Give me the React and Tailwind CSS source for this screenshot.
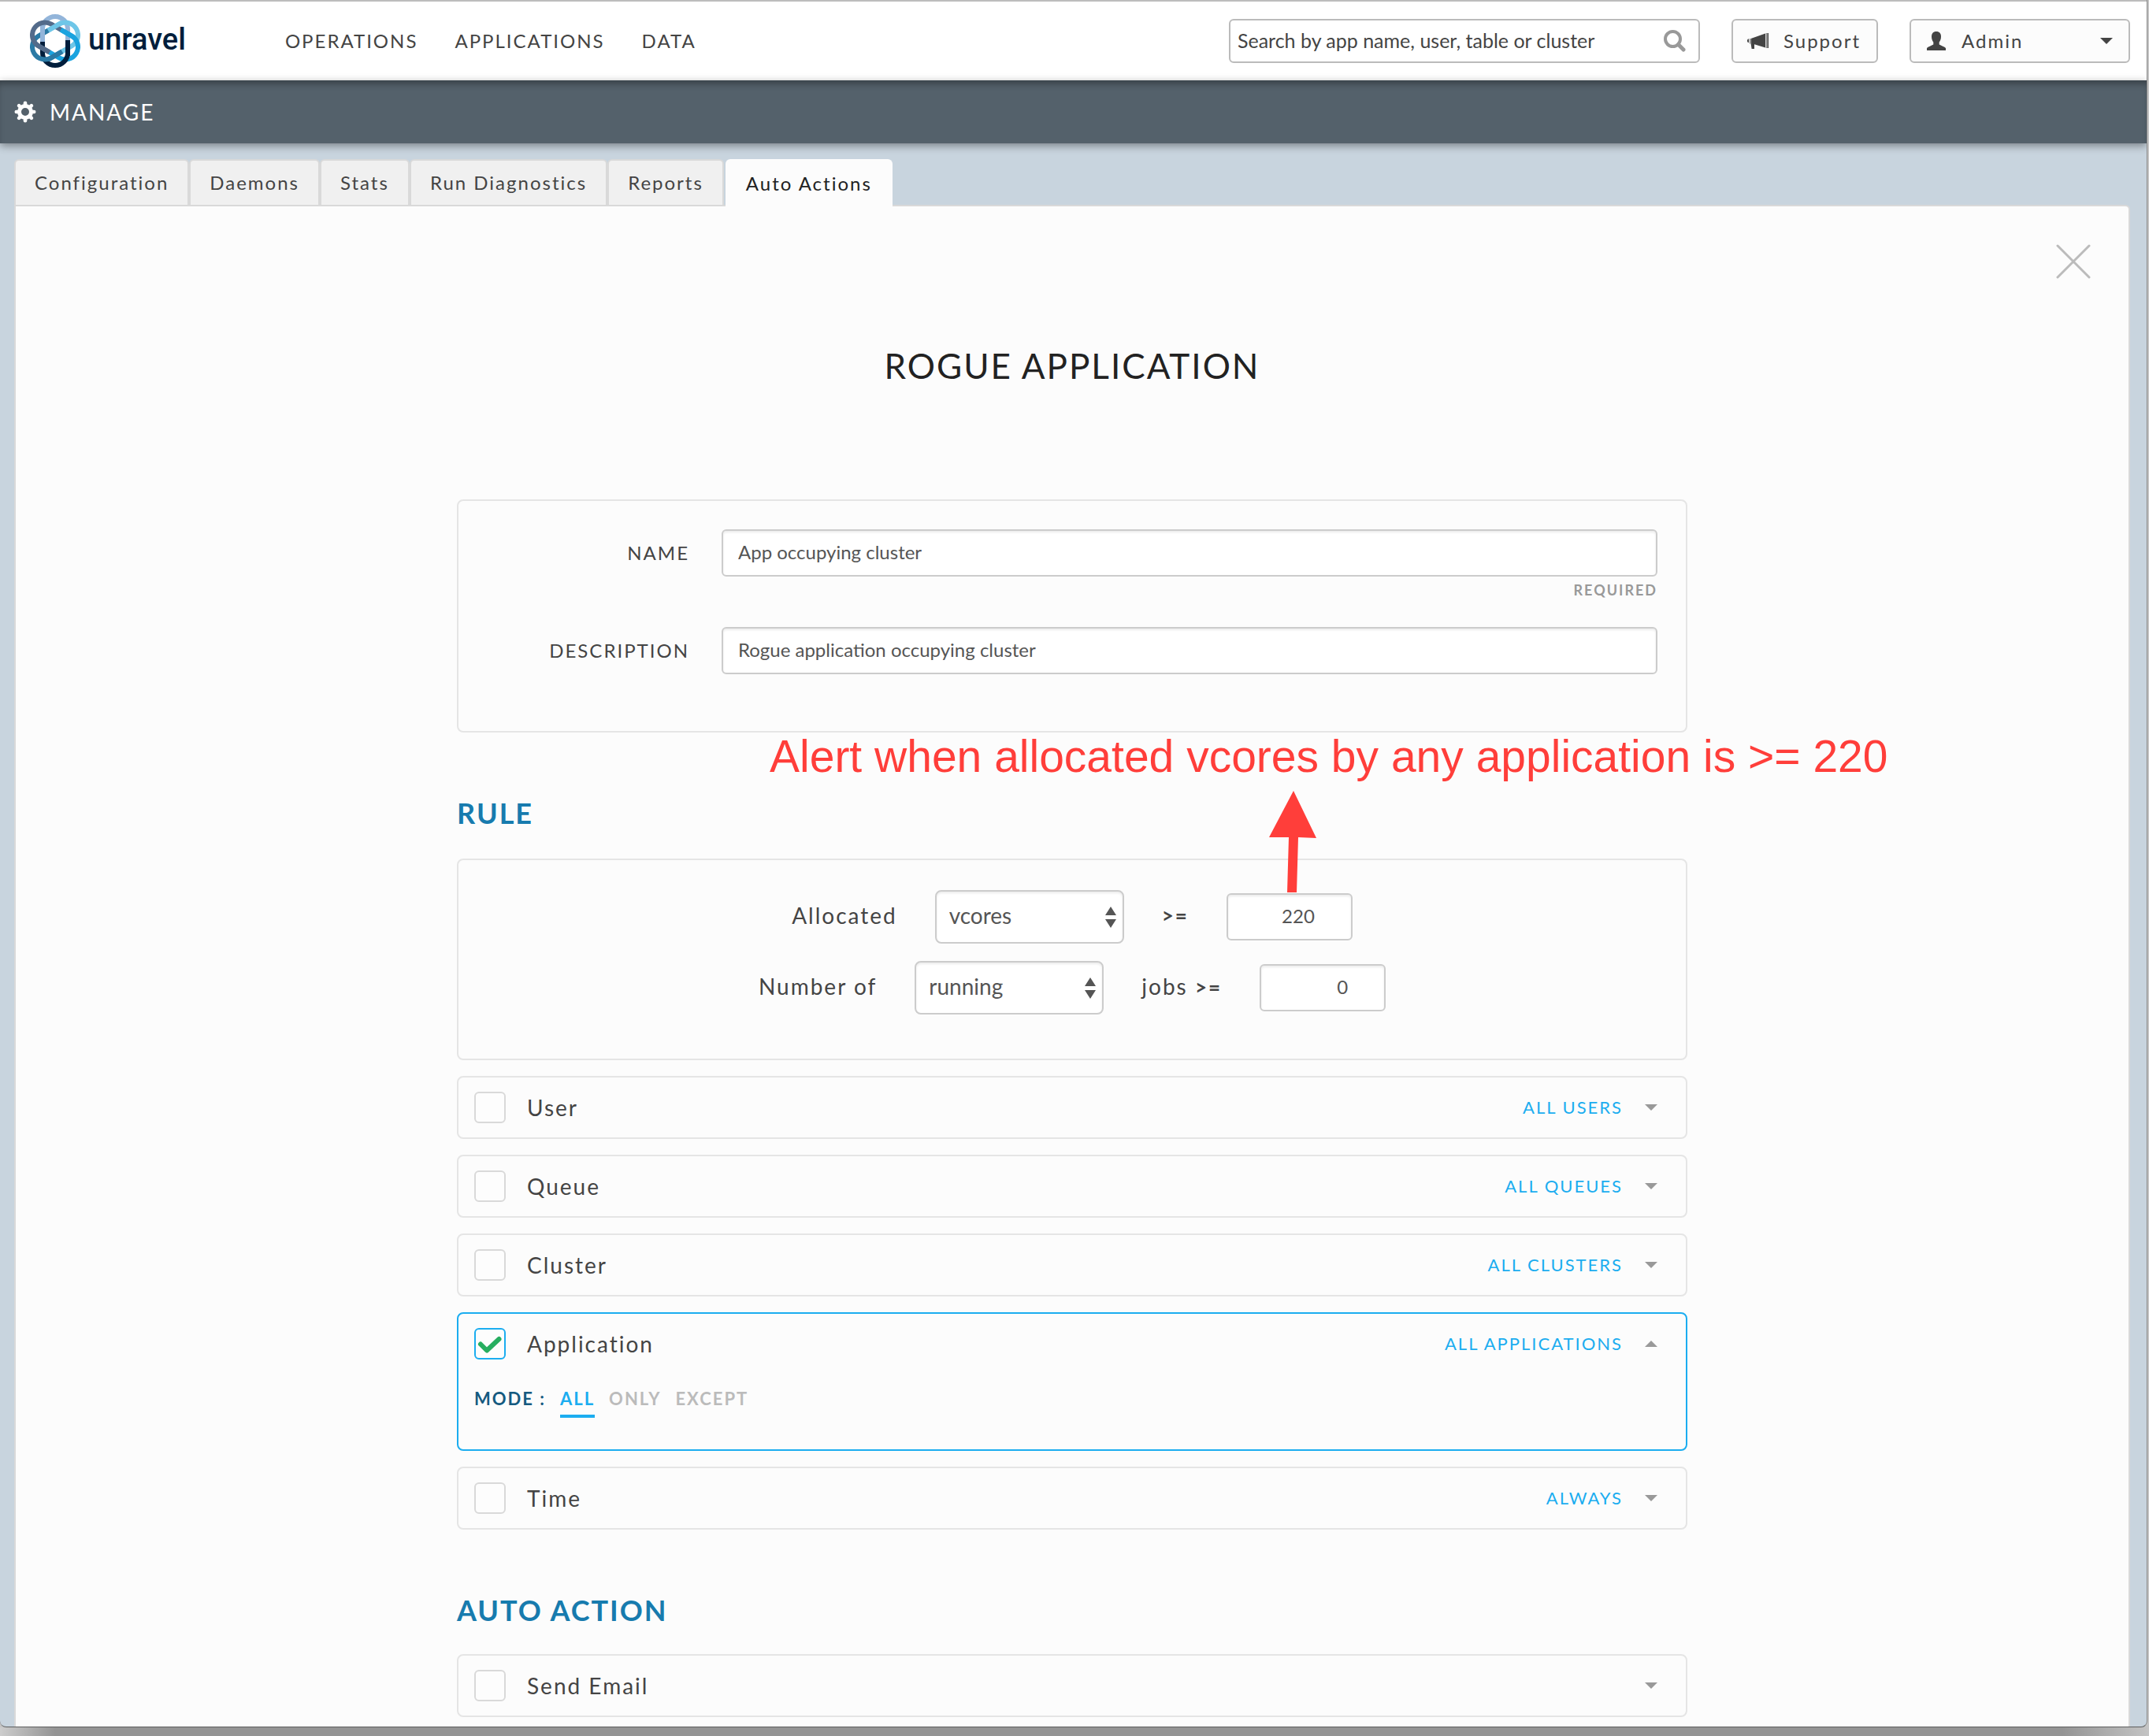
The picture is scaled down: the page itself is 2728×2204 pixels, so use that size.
const LINKS = [
  { color: "#93b5da", turn: "rotate(0)" },
  { color: "#6ec6e8", turn: "rotate(60)" },
  { color: "#1aa3df", turn: "rotate(120)" },
  { color: "#001e3c", turn: "rotate(180)" },
  { color: "#2b7aa5", turn: "rotate(240)" },
  { color: "#536b8a", turn: "rotate(300)" },
];

function LogoMark() {
  return (
    <svg className="h-[70px] w-16" viewBox="-32 -35 64 70" fill="none" strokeWidth="6" aria-hidden="true">
      {LINKS.map((l) => (
        <path key={l.color} d="M-16 0V-15A16 16 0 0 1 16 -15V0" stroke={l.color} transform={l.turn} />
      ))}
      {LINKS.map((l) => (
        <path key={l.color} d="M-16 1V-19" stroke={l.color} transform={l.turn} />
      ))}
    </svg>
  );
}

function GearIcon() {
  return (
    <svg className="h-7 w-7" viewBox="-14 -14 28 28" fill="none" stroke="#fff" aria-hidden="true">
      <circle r="7.5" strokeWidth="5" />
      {[0, 45, 90, 135, 180, 225, 270, 315].map((a) => (
        <path key={a} d="M0 -9V-11.2" strokeWidth="4.6" strokeLinecap="round" transform={`rotate(${a})`} />
      ))}
    </svg>
  );
}

function SearchIcon() {
  return (
    <svg className="h-7 w-7" viewBox="0 0 28 28" fill="none" stroke="#999" aria-hidden="true">
      <circle cx="11.5" cy="11.5" r="9.5" strokeWidth="4" />
      <path d="M18.500 18.500L25 25" strokeWidth="5" strokeLinecap="round" />
    </svg>
  );
}

function MegaphoneIcon() {
  return (
    <svg className="h-5 w-[27px]" viewBox="0 0 27 20" fill="#444" aria-hidden="true">
      <path d="M2 7.200V12.300A2.600 2.600 0 0 1 2 7.200Z" />
      <path d="M3.300 7H4V13.500H3.300Z" />
      <path d="M4.600 7L23 0.400V18.600L9 14.300V20H5.600L4.600 13.500Z" />
      <path d="M23.800 0H24.600V19H23.800ZM25.400 0H27V19H25.400Z" />
    </svg>
  );
}

function PersonIcon() {
  return (
    <svg className="h-6 w-6" viewBox="0 0 24 24" fill="#444" aria-hidden="true">
      <path d="M12 0C8 0 6 2.600 6 6.500C6 9.500 7 12 8.300 13.500V16.500C6 18 1.500 19.200 0 21V24H24V21C22.500 19.200 18 18 15.700 16.500V13.500C17 12 18 9.500 18 6.500C18 2.600 16 0 12 0Z" />
    </svg>
  );
}

function Caret({ up = false, color = "#999" }) {
  return (
    <svg className="h-2 w-4" viewBox="0 0 16 8" fill={color} aria-hidden="true">
      <path d={up ? "M0 8L8 0L16 8Z" : "M0 0L8 8L16 0Z"} />
    </svg>
  );
}

const TABS = ["Configuration", "Daemons", "Stats", "Run Diagnostics", "Reports", "Auto Actions"];

const FIELD =
  "h-[60px] rounded-md border-2 border-[#ccc] bg-white pb-1 text-[24px] tracking-normal text-[#555] shadow-[inset_0_2px_3px_rgba(0,0,0,0.08)] outline-none";

function Select({ label, value, options }) {
  return (
    <span className="relative flex">
      <select
        aria-label={label}
        defaultValue={value}
        className="h-[68px] w-60 appearance-none rounded-lg border-2 border-[#ccc] bg-white pb-1 pl-4 text-[28px] tracking-normal text-[#555] shadow-[inset_0_2px_3px_rgba(0,0,0,0.08)] outline-none"
      >
        {options.map((o) => (
          <option key={o}>{o}</option>
        ))}
      </select>
      <svg
        className="pointer-events-none absolute top-5 right-2.5 h-7 w-3.5"
        viewBox="0 0 14 28"
        fill="#555"
        aria-hidden="true"
      >
        <path d="M0 12L7 1L14 12ZM0 17L7 28L14 17Z" />
      </svg>
    </span>
  );
}

function OptionCard({ label, summary, checked = false, children }) {
  const id = `opt-${label.toLowerCase().replace(" ", "-")}`;
  return (
    <div
      className={
        checked
          ? "rounded-lg border-2 border-[#1badf0]"
          : "rounded-lg border-2 border-[#e5e5e5]"
      }
    >
      <div className="flex items-center py-[18px] pr-9 pl-5">
        <span className="relative flex">
          <input
            id={id}
            type="checkbox"
            defaultChecked={checked}
            className="peer h-10 w-10 appearance-none rounded-md border-2 border-[#d9d9d9] bg-[#fdfdfd] checked:border-[#1badf0]"
          />
          <svg
            className="pointer-events-none absolute inset-0 hidden h-10 w-10 peer-checked:block"
            viewBox="0 0 40 40"
            fill="none"
            stroke="#27ae60"
            strokeWidth="6"
            strokeLinecap="round"
            strokeLinejoin="round"
            aria-hidden="true"
          >
            <path d="M8 20.500L16 28.500L31.500 14" />
          </svg>
        </span>
        <label htmlFor={id} className="ml-[27px] text-[28px] leading-10 tracking-[2px]">
          {label}
        </label>
        <button
          type="button"
          aria-expanded={checked}
          aria-label={summary ? undefined : `Expand ${label}`}
          className="ml-auto flex items-center gap-7 text-[22px] leading-10 tracking-[2px] text-[#1badf0]"
        >
          {summary}
          <Caret up={checked} />
        </button>
      </div>
      {children}
    </div>
  );
}

export default function App() {
  return (
    <div className="flex min-h-screen flex-col bg-[#c4c4c4] font-[Lato,sans-serif] text-[24px] text-[#444]">
      <div className="mr-0.5 flex flex-1 flex-col overflow-hidden rounded-b-lg border-r border-b border-r-[#8a8a8a] border-b-[#5e5e5e] bg-[#c8d4de]">
        <header className="flex items-center border-t-2 border-[#bdbdbd] bg-white py-[22px] pr-[21px] pl-[38px]">
          <a href="#home" className="-my-2 flex items-center gap-2.5 font-[Roboto,sans-serif] text-[38px] leading-10 font-medium text-[#001e3c]">
            <LogoMark />
            <span className="pb-1">unravel</span>
          </a>
          <nav className="ml-[126px] flex gap-[47px] leading-8 tracking-[2px]">
            <a href="#operations">OPERATIONS</a>
            <a href="#applications">APPLICATIONS</a>
            <a href="#data">DATA</a>
          </nav>
          <div className="ml-auto flex gap-10">
            <label className="flex h-14 w-[598px] items-center rounded-md border-2 border-[#bbb] bg-white pr-4 pl-[9px]">
              <input
                type="text"
                aria-label="Search"
                placeholder="Search by app name, user, table or cluster"
                className="min-w-0 flex-1 text-[25px] outline-none placeholder:text-[#444]"
              />
              <SearchIcon />
            </label>
            <button type="button" className="flex h-14 items-center gap-[19px] rounded-md border-2 border-[#bbb] bg-[#fcfcfc] pr-5 pl-[18px] tracking-[2px]">
              <MegaphoneIcon />
              Support
            </button>
            <button type="button" className="flex h-14 w-[280px] items-center gap-5 rounded-md border-2 border-[#bbb] bg-[#fcfcfc] px-5 tracking-[2px]">
              <PersonIcon />
              <span className="mr-auto">Admin</span>
              <Caret color="#444" />
            </button>
          </div>
        </header>

        <div className="flex h-20 items-center gap-[17px] bg-[#54616b] pl-[18px] text-white shadow-[inset_0_8px_10px_-4px_rgba(0,0,0,0.35),0_3px_10px_rgba(0,0,0,0.4)]">
          <GearIcon />
          <h1 className="text-[28px] tracking-[2px]">MANAGE</h1>
        </div>

        <div className="mt-5 flex pl-[18px]" role="tablist">
          {TABS.map((t) => {
            const active = t === "Auto Actions";
            return (
              <button
                key={t}
                type="button"
                role="tab"
                aria-selected={active}
                className={
                  active
                    ? "relative -mb-0.5 ml-0.5 h-[60px] rounded-t-md border-2 border-b-0 border-[#fcfcfc] bg-[#fcfcfc] px-6 tracking-[2px] text-[#222]"
                    : "h-[58px] rounded-t-md border-2 border-b-0 border-[#d9d9d9] bg-[#f0f0f0] px-6 tracking-[2px]"
                }
              >
                {t}
              </button>
            );
          })}
        </div>

        <main className="mr-[21px] ml-[18px] flex-1 rounded-tr-md border-2 border-b-0 border-[#d9d9d9] bg-[#fcfcfc] pb-2.5">
          <div className="flex justify-end pt-12 pr-12">
            <button type="button" aria-label="Close">
              <svg className="h-11 w-11" viewBox="0 0 44 44" stroke="#bbb" strokeWidth="3" strokeLinecap="round" aria-hidden="true">
                <path d="M2 2L42 42M42 2L2 42" />
              </svg>
            </button>
          </div>
          <h2 className="mt-[82px] text-center text-[44px] leading-14 tracking-[2px] text-[#222]">ROGUE APPLICATION</h2>

          <form className="mx-auto mt-[142px] max-w-[1562px]">
            <div className="grid grid-cols-[293px_1fr] gap-x-[41px] rounded-lg border-2 border-[#e5e5e5] pt-9 pr-9 pb-[72px]">
              <label htmlFor="name" className="text-right leading-[60px] tracking-[2px]">NAME</label>
              <input id="name" type="text" defaultValue="App occupying cluster" className={`${FIELD} px-[19px]`} />
              <div className="col-start-2 pt-[5px] pb-[35px] text-right text-[18px] leading-6 font-bold tracking-[2px] text-[#999]">
                REQUIRED
              </div>
              <label htmlFor="description" className="text-right leading-[60px] tracking-[2px]">DESCRIPTION</label>
              <input id="description" type="text" defaultValue="Rogue application occupying cluster" className={`${FIELD} px-[19px]`} />
            </div>

            <section className="relative pt-[78px]">
              <h3 className="mb-[34px] text-[36px] leading-[48px] font-bold tracking-[2px] text-[#177bae]">RULE</h3>
              <div className="flex flex-col gap-[22px] rounded-lg border-2 border-[#e5e5e5] pt-[38px] pb-14 text-[28px] tracking-[2px]">
                <div className="flex items-center justify-center gap-12">
                  <span className="pb-1">Allocated</span>
                  <Select label="Allocated resource" value="vcores" options={["vcores", "memory"]} />
                  <span className="pb-1 text-[26px] font-bold">&gt;=</span>
                  <input type="text" inputMode="numeric" aria-label="Allocated threshold" defaultValue="220" className={`${FIELD} w-40 pr-[46px] text-right`} />
                </div>
                <div className="flex items-center justify-center gap-12">
                  <span className="pb-1">Number of</span>
                  <Select label="Job state" value="running" options={["running", "pending"]} />
                  <span className="pb-1">jobs <span className="text-[26px] font-bold">&gt;=</span></span>
                  <input type="text" inputMode="numeric" aria-label="Job count threshold" defaultValue="0" className={`${FIELD} w-40 pr-[46px] text-right`} />
                </div>
              </div>

              <p className="absolute -top-0.5 left-[397px] font-['Liberation_Sans',sans-serif] text-[57px] leading-[64px] whitespace-nowrap text-[#ff3e3a]">
                Alert when allocated vcores by any application is &gt;= 220
              </p>
              <svg className="absolute top-[74px] left-[1031px] h-[130px] w-[60px]" viewBox="0 0 60 130" fill="#ff3e3a" aria-hidden="true">
                <path d="M31 0L60 60L37 59L35 129H23L25 59L0 59Z" />
              </svg>
            </section>

            <div className="mt-5 flex flex-col gap-5">
              <OptionCard label="User" summary="ALL USERS" />
              <OptionCard label="Queue" summary="ALL QUEUES" />
              <OptionCard label="Cluster" summary="ALL CLUSTERS" />
              <OptionCard label="Application" summary="ALL APPLICATIONS" checked>
                <div className="flex items-start gap-[18px] pt-[18px] pb-10 pl-5 text-[22px] leading-7 font-bold tracking-[2px] text-[#bbb]">
                  <span className="text-[#155a80]">MODE :</span>
                  <button type="button" className="border-b-4 border-[#1badf0] pb-1.5 text-[#1badf0]">ALL</button>
                  <button type="button">ONLY</button>
                  <button type="button">EXCEPT</button>
                </div>
              </OptionCard>
              <OptionCard label="Time" summary="ALWAYS" />
            </div>

            <section className="pt-[78px]">
              <h3 className="mb-8 text-[36px] leading-[48px] font-bold tracking-[2px] text-[#177bae]">AUTO ACTION</h3>
              <OptionCard label="Send Email" />
            </section>
          </form>
        </main>
      </div>
      <div className="h-[11px] bg-[linear-gradient(to_right,#cdcdcd,#949494_70px,#949494_calc(100%-110px),#c4c4c4)]" />
    </div>
  );
}
